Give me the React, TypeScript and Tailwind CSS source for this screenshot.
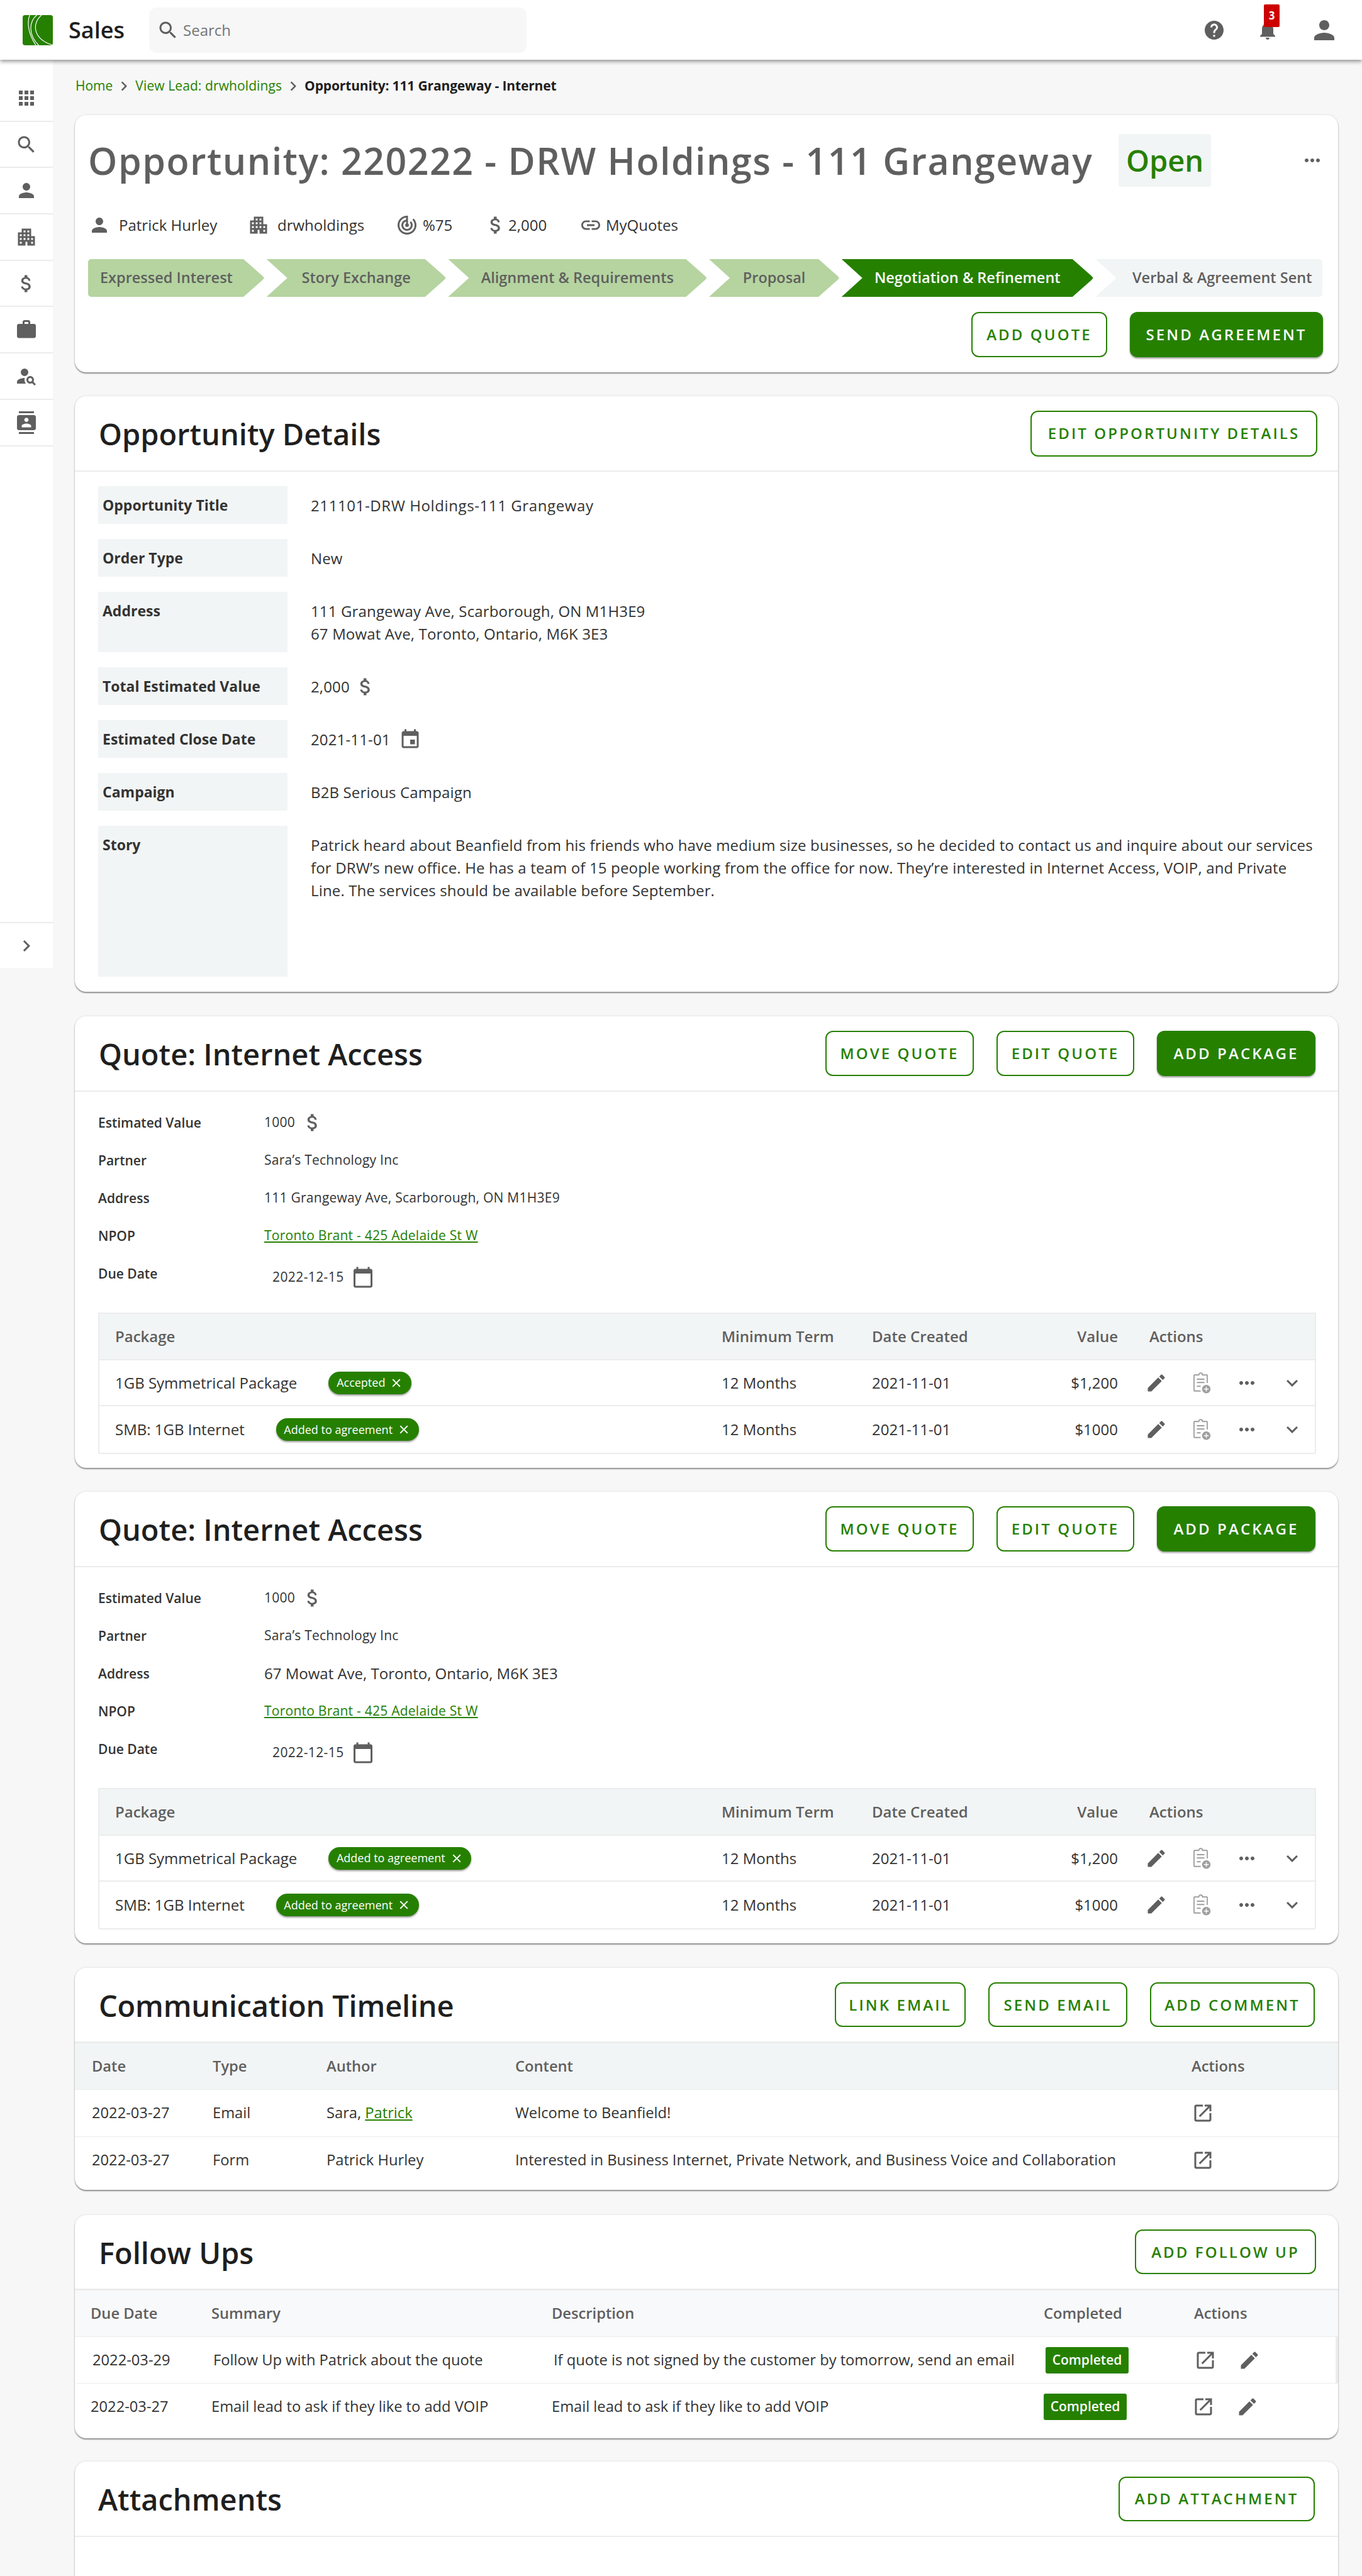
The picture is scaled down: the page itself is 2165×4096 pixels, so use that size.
import React from "react";

const P = {
  apps: "M4 8h4V4H4v4zm6 12h4v-4h-4v4zm-6 0h4v-4H4v4zm0-6h4v-4H4v4zm6 0h4v-4h-4v4zm6-10v4h4V4h-4zm-6 4h4V4h-4v4zm6 6h4v-4h-4v4zm0 6h4v-4h-4v4z",
  search: "M15.5 14h-.79l-.28-.27C15.41 12.59 16 11.11 16 9.5 16 5.91 13.09 3 9.5 3S3 5.91 3 9.5 5.91 16 9.5 16c1.61 0 3.09-.59 4.23-1.57l.27.28v.79l5 4.99L20.49 19l-4.99-5zm-6 0C7.01 14 5 11.99 5 9.5S7.01 5 9.5 5 14 7.01 14 9.5 11.99 14 9.5 14z",
  person: "M12 12c2.21 0 4-1.79 4-4s-1.79-4-4-4-4 1.79-4 4 1.79 4 4 4zm0 2c-2.67 0-8 1.34-8 4v2h16v-2c0-2.66-5.33-4-8-4z",
  apartment: "M17 11V3H7v4H3v14h8v-4h2v4h8V11h-4zM7 19H5v-2h2v2zm0-4H5v-2h2v2zm0-4H5V9h2v2zm4 4H9v-2h2v2zm0-4H9V9h2v2zm0-4H9V5h2v2zm4 8h-2v-2h2v2zm0-4h-2V9h2v2zm0-4h-2V5h2v2zm4 12h-2v-2h2v2zm0-4h-2v-2h2v2z",
  money: "M11.8 10.9c-2.27-.59-3-1.2-3-2.15 0-1.09 1.01-1.85 2.7-1.85 1.78 0 2.44.85 2.5 2.1h2.21c-.07-1.72-1.12-3.3-3.21-3.81V3h-3v2.16c-1.94.42-3.5 1.68-3.5 3.61 0 2.31 1.91 3.46 4.7 4.13 2.5.6 3 1.48 3 2.41 0 .69-.49 1.79-2.7 1.79-2.06 0-2.87-.92-2.98-2.1h-2.2c.12 2.19 1.76 3.42 3.68 3.83V21h3v-2.15c1.95-.37 3.5-1.5 3.5-3.55 0-2.84-2.43-3.81-4.7-4.4z",
  work: "M20 6h-4V4c0-1.11-.89-2-2-2h-4c-1.11 0-2 .89-2 2v2H4c-1.11 0-1.99.89-1.99 2L2 19c0 1.11.89 2 2 2h16c1.11 0 2-.89 2-2V8c0-1.11-.89-2-2-2zm-6 0h-4V4h4v2z",
  personSearch: "M10 4a4 4 0 1 0 0 8 4 4 0 0 0 0-8z M10.35 14.01C7.62 13.91 2 15.27 2 18v2h9.54c-2.47-2.76-1.23-5.89-1.19-5.99z M19.43 18.02c.36-.59.57-1.28.57-2.02 0-2.21-1.79-4-4-4s-4 1.79-4 4 1.79 4 4 4c.74 0 1.43-.22 2.02-.57L20.59 22 22 20.59l-2.57-2.57zM16 18c-1.1 0-2-.9-2-2s.9-2 2-2 2 .9 2 2-.9 2-2 2z",
  contacts: "M20 0H4v2h16V0zM4 24h16v-2H4v2zM20 4H4c-1.1 0-2 .9-2 2v12c0 1.1.9 2 2 2h16c1.1 0 2-.9 2-2V6c0-1.1-.9-2-2-2zm-8 2.75c1.24 0 2.25 1.01 2.25 2.25s-1.01 2.25-2.25 2.25S9.75 10.24 9.75 9 10.76 6.75 12 6.75zM17 17H7v-1.5c0-1.67 3.33-2.5 5-2.5s5 .83 5 2.5V17z",
  help: "M12 2C6.48 2 2 6.48 2 12s4.48 10 10 10 10-4.48 10-10S17.52 2 12 2zm1 17h-2v-2h2v2zm2.07-7.75l-.9.92C13.45 12.9 13 13.5 13 15h-2v-.5c0-1.1.45-2.1 1.17-2.83l1.24-1.26c.37-.36.59-.86.59-1.41 0-1.1-.9-2-2-2s-2 .9-2 2H8c0-2.21 1.79-4 4-4s4 1.79 4 4c0 .88-.36 1.68-.93 2.25z",
  bell: "M12 22c1.1 0 2-.9 2-2h-4c0 1.1.89 2 2 2zm6-6v-5c0-3.07-1.64-5.64-4.5-6.32V4c0-.83-.67-1.5-1.5-1.5s-1.5.67-1.5 1.5v.68C7.63 5.36 6 7.92 6 11v5l-2 2v1h16v-1l-2-2z",
  more: "M6 10c-1.1 0-2 .9-2 2s.9 2 2 2 2-.9 2-2-.9-2-2-2zm12 0c-1.1 0-2 .9-2 2s.9 2 2 2 2-.9 2-2-.9-2-2-2zm-6 0c-1.1 0-2 .9-2 2s.9 2 2 2 2-.9 2-2-.9-2-2-2z",
  edit: "M3 17.25V21h3.75L17.81 9.94l-3.75-3.75L3 17.25zM20.71 7.04c.39-.39.39-1.02 0-1.41l-2.34-2.34c-.39-.39-1.02-.39-1.41 0l-1.83 1.83 3.75 3.75 1.83-1.83z",
  open: "M19 19H5V5h7V3H5c-1.11 0-2 .9-2 2v14c0 1.1.89 2 2 2h14c1.1 0 2-.9 2-2v-7h-2v7zM14 3v2h3.59l-9.83 9.83 1.41 1.41L19 6.41V10h2V3h-7z",
  expand: "M16.59 8.59L12 13.17 7.41 8.59 6 10l6 6 6-6z",
  right: "M10 6L8.59 7.41 13.17 12l-4.58 4.59L10 18l6-6z",
  link: "M3.9 12c0-1.71 1.39-3.1 3.1-3.1h4V7H7c-2.76 0-5 2.24-5 5s2.24 5 5 5h4v-1.9H7c-1.71 0-3.1-1.39-3.1-3.1zM8 13h8v-2H8v2zm9-6h-4v1.9h4c1.71 0 3.1 1.39 3.1 3.1s-1.39 3.1-3.1 3.1h-4V17h4c2.76 0 5-2.24 5-5s-2.24-5-5-5z",
  track: "M19.07 4.93l-1.41 1.41C19.1 7.79 20 9.79 20 12c0 4.42-3.58 8-8 8s-8-3.58-8-8c0-4.08 3.05-7.44 7-7.93v2.02C8.16 6.57 6 9.03 6 12c0 3.31 2.69 6 6 6s6-2.69 6-6c0-1.66-.67-3.16-1.76-4.24l-1.41 1.41C15.55 9.9 16 10.9 16 12c0 2.21-1.79 4-4 4s-4-1.79-4-4c0-1.86 1.28-3.41 3-3.86v2.14c-.6.35-1 .98-1 1.72 0 1.1.9 2 2 2s2-.9 2-2c0-.74-.4-1.38-1-1.72V2h-1C6.48 2 2 6.48 2 12s4.48 10 10 10 10-4.48 10-10c0-2.76-1.12-5.26-2.93-7.07z",
  event: "M17 12h-5v5h5v-5zM16 1v2H8V1H6v2H5c-1.11 0-1.99.9-1.99 2L3 19c0 1.1.89 2 2 2h14c1.1 0 2-.9 2-2V5c0-1.1-.9-2-2-2h-1V1h-2zm3 18H5V8h14v11z",
  calendar: "M20 3h-1V1h-2v2H7V1H5v2H4c-1.1 0-2 .9-2 2v16c0 1.1.9 2 2 2h16c1.1 0 2-.9 2-2V5c0-1.1-.9-2-2-2zm0 18H4V8h16v13z",
  close: "M19 6.41L17.59 5 12 10.59 6.41 5 5 6.41 10.59 12 5 17.59 6.41 19 12 13.41 17.59 19 19 17.59 13.41 12z",
};

function Icon({ d, className = "" }: { d: string; className?: string }) {
  return (
    <svg viewBox="0 0 24 24" className={"h-[36px] w-[36px] shrink-0 fill-[#5f5f5f] " + className}>
      <path d={d} />
    </svg>
  );
}

function ClipAdd() {
  return (
    <svg viewBox="0 0 24 24" fill="none" className="h-[36px] w-[36px] shrink-0">
      <path d="M11 20.5H4.5a.5.5 0 0 1-.5-.5V4a.5.5 0 0 1 .5-.5H9a2 2 0 0 1 4 0h4.5a.5.5 0 0 1 .5.5v8" stroke="#9e9e9e" strokeWidth="1.2" />
      <path d="M7 8h8M7 11.5h8M7 15.5h4" stroke="#9e9e9e" strokeWidth="1.2" />
      <circle cx="17" cy="18.5" r="4.5" fill="#9e9e9e" />
      <path d="M17 16v5M14.5 18.5h5" stroke="#fff" strokeWidth="1" />
    </svg>
  );
}

function Logo() {
  return (
    <svg viewBox="0 0 64 64" className="h-[48px] w-[48px] shrink-0" fill="none">
      <rect width="64" height="64" rx="5" fill="#268000" />
      <path d="M15 0C9 14 11 38 28 64" stroke="#fff" strokeWidth="1.6" />
      <path d="M30 0C13 14 12 42 34 64" stroke="#fff" strokeWidth="1.6" />
      <path d="M40 0C19 18 22 50 62 63" stroke="#fff" strokeWidth="1.6" />
    </svg>
  );
}

function Btn({ children, solid, className = "" }: { children: React.ReactNode; solid?: boolean; className?: string }) {
  return (
    <button
      className={
        "flex shrink-0 items-center justify-center rounded-[12px] text-[24px] font-semibold uppercase tracking-[3.1px] " +
        (solid
          ? "bg-[#268000] text-white shadow-[0_2px_3px_rgba(0,0,0,0.4)] "
          : "border-[2px] border-[#268000] bg-white text-[#268000] ") +
        className
      }
    >
      {children}
    </button>
  );
}

function Chip({ label, className = "" }: { label: string; className?: string }) {
  return (
    <span className={"flex h-[36px] shrink-0 items-center justify-center gap-[7px] rounded-full bg-[#268000] text-[18px] text-white shadow-[0_2px_3px_rgba(0,0,0,0.4)] " + className}>
      {label}
      <Icon d={P.close} className="!h-[22px] !w-[22px] !fill-white" />
    </span>
  );
}

const cardClass = "rounded-[18px] bg-white shadow-[0_2px_2px_rgba(0,0,0,0.4),0_0_3px_rgba(0,0,0,0.14)]";
const titleClass = "pt-[3px] text-[47px] font-semibold text-[#1f1f1f]";

function Side({ d }: { d: string }) {
  return (
    <div className="flex h-[73.7px] items-center justify-center border-b-[2px] border-[#ececec]">
      <Icon d={d} />
    </div>
  );
}

function Stage({ label, className }: { label: string; className: string }) {
  return <div className={"flex h-[60px] shrink-0 items-center text-[23.5px] font-semibold " + className}>{label}</div>;
}

function DetailRow({ label, className = "h-[60px]", children }: { label: string; className?: string; children: React.ReactNode }) {
  return (
    <div className="flex gap-[37px]">
      <div className={"w-[301px] shrink-0 bg-[#f2f5f5] pl-[7px] text-[23px] font-bold leading-[60px] text-[#333] " + className}>{label}</div>
      <div className="pt-[13px] text-[24px] leading-[36px] tracking-[0.15px] text-[#333]">{children}</div>
    </div>
  );
}

function InfoRow({ label, children }: { label: string; children: React.ReactNode }) {
  return (
    <div className="flex h-[60px]">
      <div className="w-[264px] shrink-0 text-[21px] font-semibold leading-[60px] text-[#333]">{label}</div>
      <div className="flex h-[60px] items-center text-[21px] tracking-[0.25px] text-[#333]">{children}</div>
    </div>
  );
}

const pkgGrid = "grid h-[73.7px] grid-cols-[989px_239px_200px_191px_1fr] items-center";

function PkgRow({ name, chip, chipClass, value, last }: { name: string; chip: string; chipClass: string; value: string; last?: boolean }) {
  return (
    <div className={pkgGrid + " text-[24px] text-[#333] " + (last ? "" : "border-b-[2px] border-[#ececec]")}>
      <div className="flex items-center gap-[50px] pl-[25px]">
        <span>{name}</span>
        <Chip label={chip} className={chipClass} />
      </div>
      <div>12 Months</div>
      <div>2021-11-01</div>
      <div className="text-right">{value}</div>
      <div className="flex gap-[36px] pl-[43px]">
        <Icon d={P.edit} />
        <ClipAdd />
        <Icon d={P.more} />
        <Icon d={P.expand} />
      </div>
    </div>
  );
}

function Quote({ address, addressClass, rows, className }: { address: string; addressClass?: string; rows: React.ReactNode; className: string }) {
  return (
    <section className={cardClass + " h-[718px] " + className}>
      <div className="flex h-[120px] items-center justify-between border-b-[2px] border-[#ececec] pl-[38px] pr-[36px]">
        <h2 className={titleClass}>Quote: Internet Access</h2>
        <div className="flex gap-[36px]">
          <Btn className="h-[72px] w-[236px]">Move Quote</Btn>
          <Btn className="h-[72px] w-[219px]">Edit Quote</Btn>
          <Btn solid className="h-[72px] w-[252px]">Add Package</Btn>
        </div>
      </div>
      <div className="pl-[37px] pr-[35px] pt-[19px]">
        <InfoRow label="Estimated Value">
          <span>1000</span>
          <Icon d={P.money} className="ml-[10px]" />
        </InfoRow>
        <InfoRow label="Partner">Sara’s Technology Inc</InfoRow>
        <InfoRow label="Address"><span className={addressClass}>{address}</span></InfoRow>
        <InfoRow label="NPOP"><a className="text-[#268000] underline">Toronto Brant - 425 Adelaide St W</a></InfoRow>
        <InfoRow label="Due Date">
          <span className="ml-[13px] mt-[12px] flex items-center gap-[12px] tracking-[0.4px]">
            2022-12-15
            <Icon d={P.calendar} />
          </span>
        </InfoRow>
        <div className="mt-[32px] rounded-b-[4px] border-[2px] border-[#ececec]">
          <div className={pkgGrid + " border-b-[2px] border-[#ececec] bg-[#f2f5f5] text-[24px] font-semibold text-[#5f5f5f]"}>
            <div className="pl-[25px]">Package</div>
            <div>Minimum Term</div>
            <div>Date Created</div>
            <div className="text-right">Value</div>
            <div className="pl-[50px]">Actions</div>
          </div>
          {rows}
        </div>
      </div>
    </section>
  );
}

const commGrid = "grid h-[74px] grid-cols-[192px_181px_300px_1075px_1fr] items-center pl-[27px] text-[23.7px]";
const followGrid = "grid h-[74px] grid-cols-[192px_541px_782px_239px_1fr] items-center pl-[25px] text-[23.7px]";

function CommRow({ date, type, author, content }: { date: string; type: string; author: React.ReactNode; content: string }) {
  return (
    <div className={commGrid + " text-[#333]"}>
      <div>{date}</div>
      <div>{type}</div>
      <div>{author}</div>
      <div>{content}</div>
      <div><Icon d={P.open} /></div>
    </div>
  );
}

function CompletedChip() {
  return <span className="flex h-[42px] w-[132px] items-center justify-center rounded-[3px] bg-[#268000] text-[21px] font-semibold text-white">Completed</span>;
}

export default function App() {
  return (
    <div className="h-[4096px] overflow-hidden bg-[#f7f7f7] font-['Open_Sans',sans-serif]">
      <header className="relative z-10 flex h-[95px] items-center bg-white pl-[36px] pr-[36px] shadow-[0_3px_6px_rgba(0,0,0,0.4)]">
        <Logo />
        <span className="ml-[25px] w-[128px] text-[36px] font-semibold text-[#1f1f1f]">Sales</span>
        <div className="flex h-[72px] w-[600px] items-center gap-[6px] rounded-[12px] bg-[#f7f7f7] pl-[12px] text-[24px] text-[#757575]">
          <Icon d={P.search} />
          Search
        </div>
        <div className="ml-auto flex items-center">
          <Icon d={P.help} />
          <div className="relative ml-[49px]">
            <Icon d={P.bell} />
            <span className="absolute -top-[23px] left-[12px] flex h-[36px] w-[25px] items-center justify-center rounded-[2px] bg-[#cc0000] text-[17px] font-bold text-white">3</span>
          </div>
          <Icon d={P.person} className="ml-[48px] !h-[48px] !w-[48px]" />
        </div>
      </header>

      <div className="flex items-start">
        <aside className="flex h-[1444px] w-[84px] shrink-0 flex-col bg-white pt-[25px]">
          <Side d={P.apps} />
          <Side d={P.search} />
          <Side d={P.person} />
          <Side d={P.apartment} />
          <Side d={P.money} />
          <Side d={P.work} />
          <Side d={P.personSearch} />
          <Side d={P.contacts} />
          <div className="mt-auto flex h-[73px] items-center justify-center border-t-[2px] border-[#ececec]">
            <Icon d={P.right} />
          </div>
        </aside>

        <main className="min-w-0 flex-1 pl-[35px] pr-[38px]">
          <nav className="flex h-[88px] items-center pb-[4px] text-[21px] text-[#268000]">
            <span className="ml-px">Home</span>
            <Icon d={P.right} className="!h-[30px] !w-[30px] mx-[3px]" />
            <span className="tracking-[0.1px]">View Lead: drwholdings</span>
            <Icon d={P.right} className="!h-[30px] !w-[30px] mx-[3px]" />
            <span className="font-bold tracking-[-0.15px] text-[#1f1f1f]">Opportunity: 111 Grangeway - Internet</span>
          </nav>

          <section className={cardClass + " h-[409px] pl-[21px] pr-[24px] pt-[30px]"}>
            <div className="flex h-[84px] items-center">
              <h1 className="text-[59px] font-semibold tracking-[1.5px] text-[#5f5f5f]">Opportunity: 220222 - DRW Holdings - 111 Grangeway</h1>
              <span className="ml-auto flex h-[84px] w-[147px] items-center justify-center rounded-[4px] bg-[#f2f5f5] text-[47px] font-semibold text-[#268000]">Open</span>
              <Icon d={P.more} className="ml-[143px] -mr-[1px]" />
            </div>
            <div className="mt-[43px] flex h-[36px] items-center text-[24px] text-[#333]">
              <div className="flex w-[253px] items-center gap-[13px]"><Icon d={P.person} />Patrick Hurley</div>
              <div className="flex w-[236px] items-center gap-[12px]"><Icon d={P.apartment} />drwholdings</div>
              <div className="flex w-[141px] items-center gap-[7px]"><Icon d={P.track} />%75</div>
              <div className="flex w-[151px] items-center gap-[2px]"><Icon d={P.money} />2,000</div>
              <div className="flex items-center gap-[6px]"><Icon d={P.link} />MyQuotes</div>
            </div>
            <div className="mt-[36px] flex gap-[3.7px]">
              <Stage label="Expressed Interest" className="w-[280px] rounded-l-[5px] bg-[#b5d4a0] pl-[19px] text-[#5f5f5f] [clip-path:polygon(0_0,calc(100%_-_33px)_0,calc(100%_-_3px)_44%,100%_50%,calc(100%_-_3px)_56%,calc(100%_-_33px)_100%,0_100%)]" />
              <Stage label="Story Exchange" className="w-[285px] justify-center bg-[#b5d4a0] text-[#5f5f5f] [clip-path:polygon(0_0,calc(100%_-_33px)_0,calc(100%_-_3px)_44%,100%_50%,calc(100%_-_3px)_56%,calc(100%_-_33px)_100%,0_100%,33px_50%)]" />
              <Stage label="Alignment & Requirements" className="w-[411px] justify-center bg-[#b5d4a0] text-[#5f5f5f] [clip-path:polygon(0_0,calc(100%_-_33px)_0,calc(100%_-_3px)_44%,100%_50%,calc(100%_-_3px)_56%,calc(100%_-_33px)_100%,0_100%,33px_50%)]" />
              <Stage label="Proposal" className="w-[207px] justify-center bg-[#b5d4a0] text-[#5f5f5f] [clip-path:polygon(0_0,calc(100%_-_33px)_0,calc(100%_-_3px)_44%,100%_50%,calc(100%_-_3px)_56%,calc(100%_-_33px)_100%,0_100%,33px_50%)]" />
              <Stage label="Negotiation & Refinement" className="w-[400px] justify-center bg-[#268000] text-white [clip-path:polygon(0_0,calc(100%_-_33px)_0,calc(100%_-_3px)_44%,100%_50%,calc(100%_-_3px)_56%,calc(100%_-_33px)_100%,0_100%,33px_50%)]" />
              <Stage label="Verbal & Agreement Sent" className="w-[361px] justify-end rounded-r-[5px] bg-[#f2f5f5] pr-[17px] text-[#5f5f5f] [clip-path:polygon(0_0,100%_0,100%_100%,0_100%,33px_50%)]" />
            </div>
            <div className="mt-[24px] flex justify-end gap-[36px]">
              <Btn className="h-[72px] w-[216px]">Add Quote</Btn>
              <Btn solid className="h-[72px] w-[307px]">Send Agreement</Btn>
            </div>
          </section>

          <section className={cardClass + " mt-[38px] h-[947px]"}>
            <div className="flex h-[120px] items-center justify-between border-b-[2px] border-[#ececec] pl-[38px] pr-[33px]">
              <h2 className={titleClass}>Opportunity Details</h2>
              <Btn className="h-[73px] w-[456px]">Edit Opportunity Details</Btn>
            </div>
            <div className="flex flex-col gap-[24px] pl-[37px] pr-[33px] pt-[23px]">
              <DetailRow label="Opportunity Title"><span className="tracking-[0.6px]">211101-DRW Holdings-111 Grangeway</span></DetailRow>
              <DetailRow label="Order Type">New</DetailRow>
              <DetailRow label="Address" className="h-[96px]">
                111 Grangeway Ave, Scarborough, ON M1H3E9
                <br />
                67 Mowat Ave, Toronto, Ontario, M6K 3E3
              </DetailRow>
              <DetailRow label="Total Estimated Value">
                <span className="flex items-center gap-[7px]">2,000 <Icon d={P.money} /></span>
              </DetailRow>
              <DetailRow label="Estimated Close Date">
                <span className="flex items-center gap-[13px]">2021-11-01 <Icon d={P.event} /></span>
              </DetailRow>
              <DetailRow label="Campaign">B2B Serious Campaign</DetailRow>
              <DetailRow label="Story" className="h-[240px]">
                Patrick heard about Beanfield from his friends who have medium size businesses, so he decided to contact us and inquire about our services
                <br />
                for DRW’s new office. He has a team of 15 people working from the office for now. They’re interested in Internet Access, VOIP, and Private
                <br />
                Line. The services should be available before September.
              </DetailRow>
            </div>
          </section>

          <Quote
            className="mt-[39px]"
            address="111 Grangeway Ave, Scarborough, ON M1H3E9"
            rows={
              <>
                <PkgRow name="1GB Symmetrical Package" chip="Accepted" chipClass="w-[132px]" value="$1,200" />
                <PkgRow name="SMB: 1GB Internet" chip="Added to agreement" chipClass="w-[227px]" value="$1000" last />
              </>
            }
          />
          <Quote
            className="mt-[38px]"
            address="67 Mowat Ave, Toronto, Ontario, M6K 3E3"
            addressClass="text-[24px] tracking-[0px]"
            rows={
              <>
                <PkgRow name="1GB Symmetrical Package" chip="Added to agreement" chipClass="w-[227px]" value="$1,200" />
                <PkgRow name="SMB: 1GB Internet" chip="Added to agreement" chipClass="w-[227px]" value="$1000" last />
              </>
            }
          />

          <section className={cardClass + " mt-[39px] h-[353px]"}>
            <div className="flex h-[120px] items-center justify-between border-b-[3px] border-[#ececec] pl-[38px] pr-[37px]">
              <h2 className={titleClass + " tracking-[-0.2px]"}>Communication Timeline</h2>
              <div className="flex gap-[36px]">
                <Btn className="h-[71px] w-[208px]">Link Email</Btn>
                <Btn className="h-[71px] w-[221px]">Send Email</Btn>
                <Btn className="h-[71px] w-[262px]">Add Comment</Btn>
              </div>
            </div>
            <div className={commGrid + " border-b-[1.5px] border-[#ececec] bg-[#f2f5f5] font-semibold text-[#5f5f5f]"}>
              <div>Date</div>
              <div>Type</div>
              <div>Author</div>
              <div>Content</div>
              <div>Actions</div>
            </div>
            <div className="border-b-[1.5px] border-[#ececec]">
              <CommRow date="2022-03-27" type="Email" author={<>Sara, <a className="text-[#268000] underline">Patrick</a></>} content="Welcome to Beanfield!" />
            </div>
            <CommRow date="2022-03-27" type="Form" author="Patrick Hurley" content="Interested in Business Internet, Private Network, and Business Voice and Collaboration" />
          </section>

          <section className={cardClass + " mt-[40px] h-[355px]"}>
            <div className="flex h-[120px] items-center justify-between border-b-[3px] border-[#ececec] pl-[38px] pr-[35px]">
              <h2 className={titleClass}>Follow Ups</h2>
              <Btn className="h-[71px] w-[288px]">Add Follow Up</Btn>
            </div>
            <div className={followGrid + " border-b-[1.5px] border-[#ececec] bg-[#f8f9fa] font-semibold text-[#5f5f5f]"}>
              <div>Due Date</div>
              <div>Summary</div>
              <div>Description</div>
              <div>Completed</div>
              <div>Actions</div>
            </div>
            <div className={followGrid + " ml-[3px] border-b-[1.5px] border-r-[4px] border-[#ececec] text-[#333]"}>
              <div>2022-03-29</div>
              <div>Follow Up with Patrick about the quote</div>
              <div>If quote is not signed by the customer by tomorrow, send an email</div>
              <div><CompletedChip /></div>
              <div className="-ml-[3px] flex gap-[34px]"><Icon d={P.open} /><Icon d={P.edit} /></div>
            </div>
            <div className={followGrid + " text-[#333]"}>
              <div>2022-03-27</div>
              <div>Email lead to ask if they like to add VOIP</div>
              <div>Email lead to ask if they like to add VOIP</div>
              <div><CompletedChip /></div>
              <div className="-ml-[3px] flex gap-[34px]"><Icon d={P.open} /><Icon d={P.edit} /></div>
            </div>
          </section>

          <section className={cardClass + " mt-[37px] h-[300px]"}>
            <div className="flex h-[120px] items-center justify-between border-b-[2px] border-[#ececec] pl-[37px] pr-[37px]">
              <h2 className={titleClass}>Attachments</h2>
              <Btn className="h-[71px] w-[312px]">Add Attachment</Btn>
            </div>
          </section>
        </main>
      </div>
    </div>
  );
}
